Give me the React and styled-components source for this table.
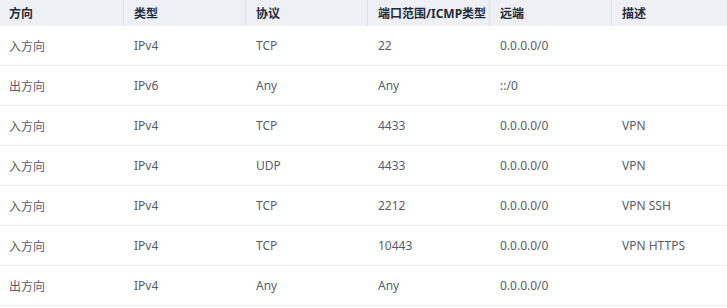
import React from 'react';
import styled, { createGlobalStyle } from 'styled-components';

const Global = createGlobalStyle`
    body {
        margin: 0;
        background: #ffffff;
        font-family: "Noto Sans", "Noto Sans CJK SC", sans-serif;
        font-size: 12px;
    }
`;

const Table = styled.div`
    width: 727px;
`;

const Row = styled.div`
    display: grid;
    grid-template-columns: 123px 122px 122px 122px 122px 1fr;
    height: ${props => (props.head ? '26px' : '40px')};
    background: ${props => (props.head ? '#eef0f5' : '#ffffff')};
    border-bottom: ${props => (props.head ? 'none' : '1px solid #e9ebf0')};
    box-sizing: border-box;
    :hover {
        background-color: ${props => (props.head ? '#eef0f5' : '#f5f6fa')};
    }
`;

const Head = styled.div`
    display: flex;
    align-items: center;
    padding-left: ${props => (props.first ? '9px' : '10px')};
    border-left: ${props => (props.first ? 'none' : '1px solid #dcdfe8')};
    font-weight: bold;
    color: #252b3a;
    white-space: nowrap;
    overflow: hidden;
`;

const Cell = styled.div`
    display: flex;
    align-items: center;
    padding-left: ${props => (props.first ? '9px' : '11px')};
    color: #575d6c;
    white-space: nowrap;
`;

const columns = ['方向', '类型', '协议', '端口范围/ICMP类型', '远端', '描述'];

const rules = [
    ['入方向', 'IPv4', 'TCP', '22', '0.0.0.0/0', ''],
    ['出方向', 'IPv6', 'Any', 'Any', '::/0', ''],
    ['入方向', 'IPv4', 'TCP', '4433', '0.0.0.0/0', 'VPN'],
    ['入方向', 'IPv4', 'UDP', '4433', '0.0.0.0/0', 'VPN'],
    ['入方向', 'IPv4', 'TCP', '2212', '0.0.0.0/0', 'VPN SSH'],
    ['入方向', 'IPv4', 'TCP', '10443', '0.0.0.0/0', 'VPN HTTPS'],
    ['出方向', 'IPv4', 'Any', 'Any', '0.0.0.0/0', ''],
];

export default function App() {
    return (
        <>
            <Global />
            <Table>
                <Row head>
                    {columns.map((c, i) => (
                        <Head key={c} first={i === 0}>{c}</Head>
                    ))}
                </Row>
                {rules.map((r, ri) => (
                    <Row key={ri}>
                        {r.map((v, i) => (
                            <Cell key={i} first={i === 0}>{v}</Cell>
                        ))}
                    </Row>
                ))}
            </Table>
        </>
    );
}
